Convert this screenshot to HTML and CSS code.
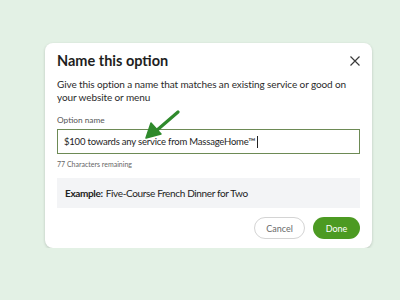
FILE: index.html
```html
<!DOCTYPE html>
<html>
<head>
<meta charset="UTF-8">
<title>Name this option</title>
<link rel="stylesheet" href="styles.css">
</head>
<body>

<div class="stage">
	<div class="dialog">
		<div class="dialog_head">
			<h2>Name this option</h2>
			<button class="btn_close" aria-label="Close">
				<svg width="10" height="10" viewBox="0 0 10 10"><path d="M0.5 0.5L9.5 9.5M9.5 0.5L0.5 9.5" stroke="#3a3a3a" stroke-width="1.2" fill="none"/></svg>
			</button>
		</div>
		<p class="desc">Give this option a name that matches an existing service or good on your website or menu</p>

		<label class="field_label" for="optionName">Option name</label>
		<div class="field_box" id="optionName">$100 towards any service from MassageHome™<span class="caret"></span></div>
		<div class="field_help">77 Characters remaining</div>

		<div class="example"><b>Example:</b> Five-Course French Dinner for Two</div>

		<div class="actions">
			<button class="btn_cancel">Cancel</button>
			<button class="btn_done">Done</button>
		</div>

		<!-- 화살표 -->
		<svg class="arrow" width="40" height="34" viewBox="0 0 40 34">
			<path d="M34 2L12 21" stroke="#2f8a2c" stroke-width="3.2" stroke-linecap="round" fill="none"/>
			<path d="M2 28L7 13L17 24Z" fill="#2f8a2c" stroke="#2f8a2c" stroke-width="1.5" stroke-linejoin="round"/>
		</svg>
	</div>
</div>

</body>
</html>
```

FILE: styles.css
```css
body {
	margin: 0;
	background-color: #e3f1e5;
	font-family: Lato, "Liberation Sans", sans-serif;
	color: #222222;
}
.stage {
	padding: 43px 28px 0 45px;
}
.dialog {
	position: relative;
	width: 327px;
	box-sizing: border-box;
	background-color: #ffffff;
	border-radius: 8px;
	padding: 8px 12px 9px 12px;
	box-shadow: 0 1px 3px rgba(0, 0, 0, 0.18);
}
.dialog_head {
	display: flex;
	justify-content: space-between;
	align-items: center;
}
h2 {
	margin: 0;
	font-size: 14.5px;
	font-weight: 700;
	line-height: 20px;
	color: #1e1e1e;
}
.btn_close {
	border: 0;
	background: none;
	padding: 0;
	width: 10px;
	height: 10px;
	display: flex;
}
.desc {
	margin: 6.5px 0 0 0;
	font-size: 10px;
	letter-spacing: -0.1px;
	line-height: 13px;
	color: #2a2a2a;
}
.field_label {
	display: block;
	margin-top: 10.5px;
	font-size: 8.3px;
	line-height: 12px;
	color: #555555;
}
.field_box {
	margin-top: 3px;
	height: 25px;
	box-sizing: border-box;
	border: 1.5px solid #6d8a55;
	padding: 0 6px;
	display: flex;
	align-items: center;
	font-size: 9.5px;
	letter-spacing: -0.2px;
	color: #1e1e1e;
}
.caret {
	display: inline-block;
	width: 1px;
	height: 12px;
	margin-left: 2px;
	background-color: #222222;
}
.field_help {
	margin-top: 5px;
	font-size: 7px;
	line-height: 10px;
	color: #666666;
}
.example {
	margin-top: 9px;
	height: 30px;
	box-sizing: border-box;
	padding: 0 8px;
	display: flex;
	align-items: center;
	background-color: #f3f4f6;
	font-size: 10px;
	letter-spacing: -0.35px;
	color: #222222;
}
.example b {
	font-weight: 700;
	margin-right: 3px;
}
.actions {
	display: flex;
	justify-content: flex-end;
	gap: 8px;
	margin-top: 9px;
}
.actions button {
	height: 22px;
	border-radius: 11px;
	font-family: inherit;
	font-size: 9px;
	padding: 0;
	cursor: pointer;
}
.btn_cancel {
	width: 51px;
	background-color: #ffffff;
	border: 1px solid #d4d4d4;
	color: #6a6a6a;
}
.btn_done {
	width: 47px;
	background-color: #4c9a22;
	border: 0;
	color: #ffffff;
}
.arrow {
	position: absolute;
	left: 99px;
	top: 67px;
}
```
